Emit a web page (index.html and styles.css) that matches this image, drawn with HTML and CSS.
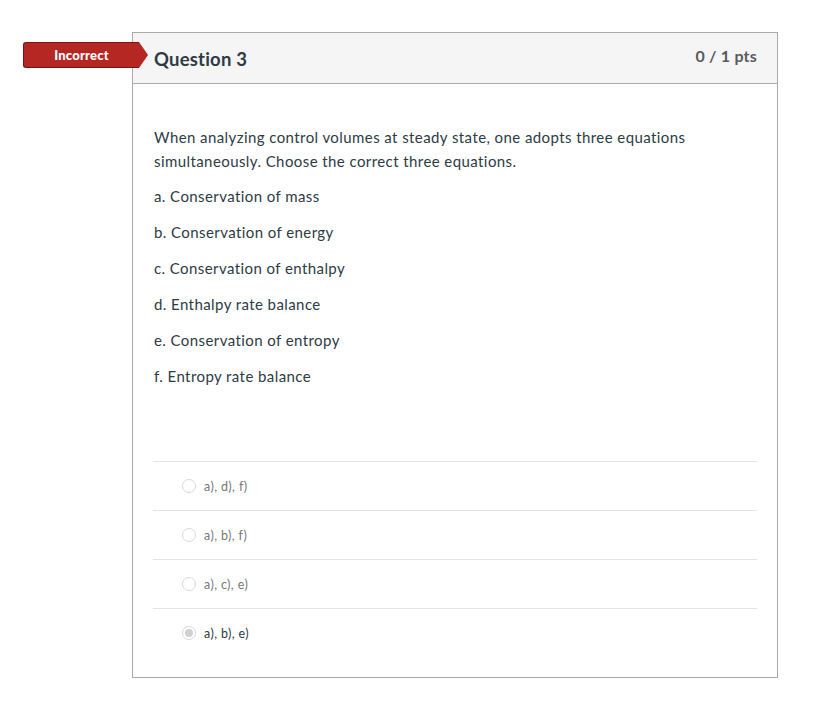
FILE: index.html
```html
<!DOCTYPE html>
<html>
<head>
<meta charset="utf-8">
<link rel="stylesheet" href="styles.css">
</head>
<body>
<div class="page">
  <div class="card">
    <div class="badge"><span class="badge-text">Incorrect</span></div>
    <div class="header">
      <div class="title">Question 3</div>
      <div class="pts">0 / 1 pts</div>
    </div>
    <div class="content">
      <div class="question">
        <p class="lead">When analyzing control volumes at steady state, one adopts three equations simultaneously. Choose the correct three equations.</p>
        <p>a. Conservation of mass</p>
        <p>b. Conservation of energy</p>
        <p>c. Conservation of enthalpy</p>
        <p>d. Enthalpy rate balance</p>
        <p>e. Conservation of entropy</p>
        <p>f. Entropy rate balance</p>
      </div>
      <div class="answers">
        <div class="answer"><span class="radio"></span><span class="atext">a), d), f)</span></div>
        <div class="answer"><span class="radio"></span><span class="atext">a), b), f)</span></div>
        <div class="answer"><span class="radio"></span><span class="atext">a), c), e)</span></div>
        <div class="answer selected"><span class="radio"></span><span class="atext">a), b), e)</span></div>
      </div>
    </div>
  </div>
</div>
</body>
</html>
```
FILE: styles.css
```css
html, body {
  margin: 0;
  padding: 0;
  background: #fff;
}
body {
  font-family: Lato, "Open Sans", "Liberation Sans", sans-serif;
  color: #2d3b45;
}
.page {
  padding: 32px 0 0 132px;
}
.card {
  position: relative;
  width: 646px;
  height: 646px;
  border: 1px solid #aaaaaa;
  box-sizing: border-box;
}
.badge {
  position: absolute;
  left: -110px;
  top: 9px;
  width: 116px;
  height: 26px;
  box-sizing: border-box;
  background: #b52723;
  border: 1px solid #7a1512;
  border-right: none;
  border-radius: 3px 0 0 3px;
  display: flex;
  align-items: center;
  justify-content: center;
}
.badge::after {
  content: "";
  position: absolute;
  right: -9px;
  top: -1px;
  width: 0;
  height: 0;
  border-top: 13px solid transparent;
  border-bottom: 13px solid transparent;
  border-left: 9px solid #b52723;
}
.badge-text {
  color: #fff;
  font-weight: 900;
  font-size: 13px;
  letter-spacing: 0.2px;
}
.header {
  height: 50px;
  background: #f5f5f5;
  border-bottom: 1px solid #aaaaaa;
  display: flex;
  justify-content: space-between;
  align-items: flex-start;
  padding: 0 20px 0 21px;
}
.title {
  font-weight: 700;
  font-size: 18.5px;
  margin-top: 15px;
  letter-spacing: 0.2px;
  color: #2d3b45;
}
.pts {
  font-weight: 700;
  font-size: 16px;
  margin-top: 13px;
  letter-spacing: 0.2px;
  color: #555b60;
}
.content {
  padding: 0 20px 0 20px;
}
.question {
  padding: 41px 0 0 1px;
  font-size: 15px;
  line-height: 24px;
  letter-spacing: 0.42px;
}
.question p {
  margin: 0 0 12px 0;
}
.question .lead {
  margin-bottom: 11px;
}
.answers {
  margin-top: 73px;
}
.answer {
  height: 48px;
  border-top: 1px solid #e3e3e3;
  display: flex;
  align-items: center;
  padding-left: 29px;
}
.radio {
  width: 12px;
  height: 12px;
  border: 1px solid #d8d8d8;
  border-radius: 50%;
  box-sizing: content-box;
  margin-right: 8px;
  position: relative;
  background: #fff;
}
.selected .radio::after {
  content: "";
  position: absolute;
  left: 2px;
  top: 2px;
  width: 8px;
  height: 8px;
  border-radius: 50%;
  background: #cfcfcf;
}
.atext {
  font-size: 12.5px;
  letter-spacing: 0.4px;
  color: #777;
}
.selected .atext {
  color: #2d3b45;
}
```
